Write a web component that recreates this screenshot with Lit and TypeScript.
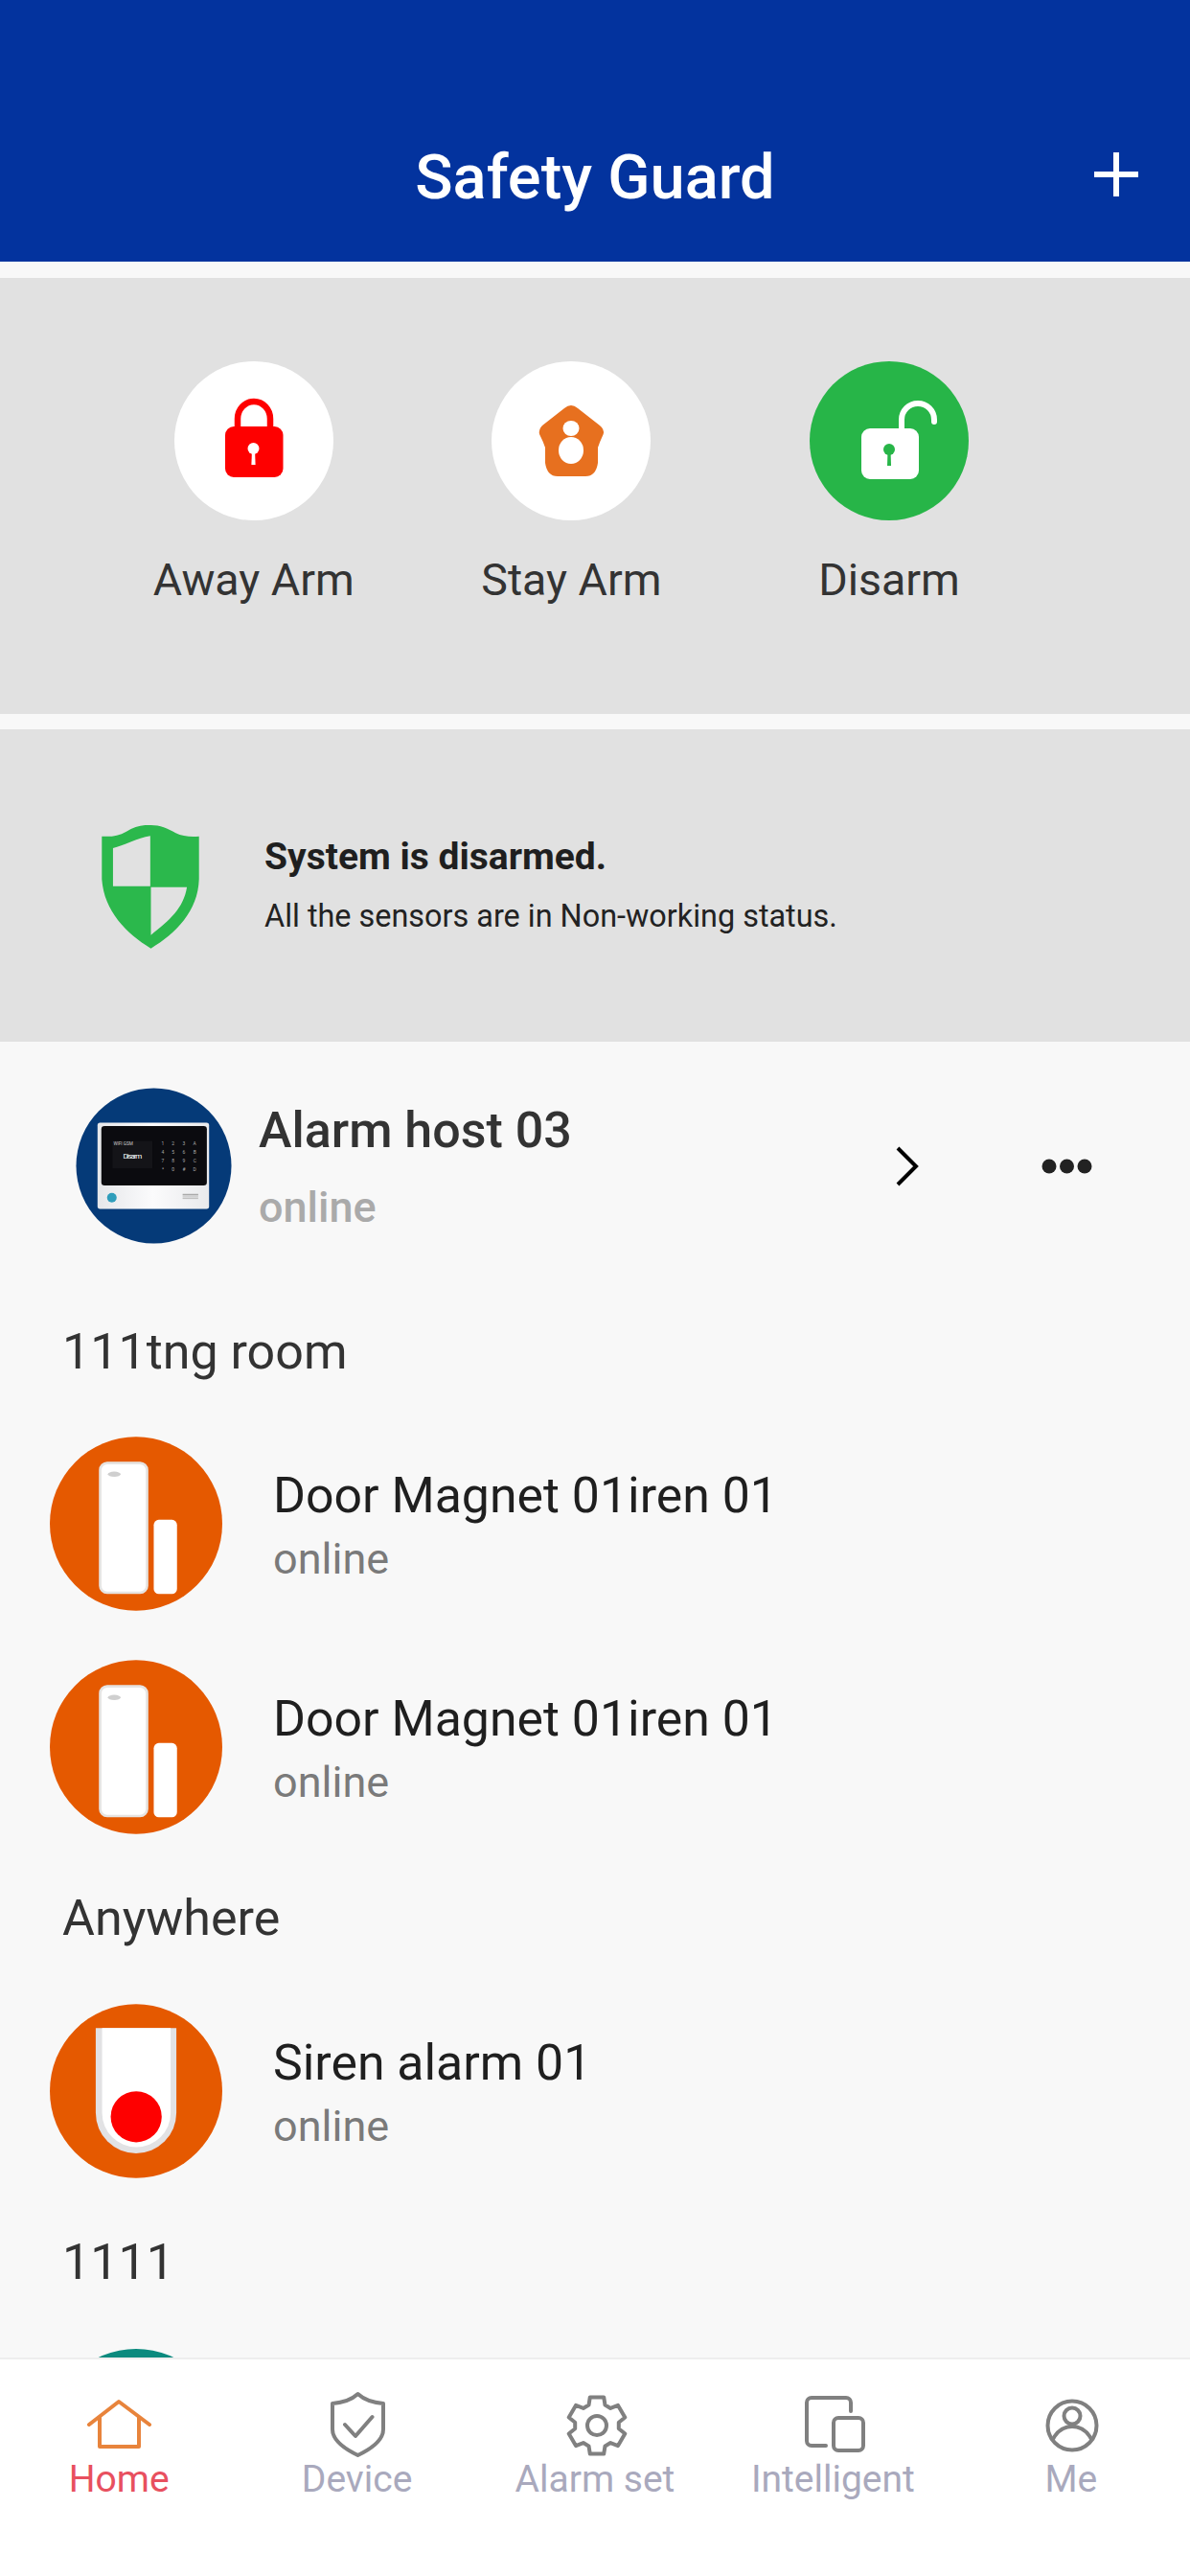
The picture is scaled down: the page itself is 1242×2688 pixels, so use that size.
import { LitElement, html, css, svg } from "lit";
import { customElement } from "lit/decorators.js";

const gearPath = (() => {
  const cx = 37, cy = 36, R = 30.5, r = 23;
  const pts: string[] = [];
  for (let i = 0; i < 6; i++) {
    const a = -Math.PI / 2 + (i * Math.PI) / 3;
    const p = (rad: number, d: number) =>
      `${(cx + rad * Math.cos(a + d)).toFixed(1)} ${(cy + rad * Math.sin(a + d)).toFixed(1)}`;
    pts.push(p(r, -0.38), p(R, -0.24), p(R, 0.24), p(r, 0.38));
  }
  return "M" + pts.join("L") + "Z";
})();

const hostIcon = svg`<svg class="host-img" viewBox="58 45 487 490">
  <defs><linearGradient id="bodyg" x1="0" x2="1" y1="0" y2="0"><stop offset="0" stop-color="#e6e7ea"/><stop offset=".5" stop-color="#fbfbfc"/><stop offset="1" stop-color="#e9eaec"/></linearGradient></defs>
  <circle cx="301.5" cy="290" r="243.5" fill="#053a78"/>
  <rect x="125" y="155" width="350" height="270" rx="8" fill="url(#bodyg)"/>
  <rect x="137" y="165" width="331" height="187" rx="10" fill="#0b0b0f"/>
  <rect x="172" y="212" width="125" height="86" fill="#141418"/>
  <text x="175" y="226" fill="#ccc" font-size="14" font-family="Roboto, sans-serif">WIFI GSM</text>
  <text x="235" y="268" fill="#fff" font-size="24" font-family="Roboto, sans-serif" text-anchor="middle" textLength="60">Disarm</text>
  <g fill="#aaa" font-size="15" font-family="Roboto, sans-serif" text-anchor="middle">
    <text x="330" y="226">1</text><text x="362" y="226">2</text><text x="396" y="226">3</text><text x="430" y="226">A</text>
    <text x="330" y="253">4</text><text x="362" y="253">5</text><text x="396" y="253">6</text><text x="430" y="253">B</text>
    <text x="330" y="279">7</text><text x="362" y="279">8</text><text x="396" y="279">9</text><text x="430" y="279">C</text>
    <text x="330" y="306">*</text><text x="362" y="306">0</text><text x="396" y="306">#</text><text x="430" y="306">D</text>
  </g>
  <circle cx="170" cy="390" r="15" fill="#2f9dbb"/>
  <rect x="392" y="378" width="49" height="5" fill="#aaa"/><rect x="392" y="386" width="49" height="3" fill="#bbb"/><rect x="392" y="391" width="49" height="3" fill="#bbb"/>
</svg>`;

const doorIcon = svg`<svg class="dev-img" viewBox="36 55 541 545">
  <ellipse cx="306.5" cy="327.5" rx="270.5" ry="272.5" fill="#e55900"/>
  <rect x="194" y="137" width="147" height="407" rx="22" fill="#fff" stroke="#e6e4e2" stroke-width="8"/>
  <rect x="362" y="315" width="73" height="233" rx="16" fill="#fff"/>
  <ellipse cx="238" cy="172" rx="20" ry="8" fill="#cfcfcf"/>
</svg>`;

const sirenIcon = svg`<svg class="dev-img" viewBox="36 35 541 545">
  <ellipse cx="306.5" cy="307.5" rx="270.5" ry="272.5" fill="#e55900"/>
  <path d="M180 110H433V376A126.5 126.5 0 0 1 180 376Z" fill="#e2e2e4"/>
  <path d="M200 110H415V376A107.5 107.5 0 0 1 200 376Z" fill="#fff"/>
  <circle cx="307" cy="388" r="80" fill="#fe0000"/>
</svg>`;

const tealIcon = svg`<svg class="dev-img" viewBox="0 0 180 180"><circle cx="90" cy="90" r="90" fill="#0b8a7e"/></svg>`;

const awayIcon = svg`<svg class="mode-svg" viewBox="0 0 166 166">
  <path d="M66 70V60a17 18 0 0 1 34 0V70" fill="none" stroke="#fe0000" stroke-width="6.5"/>
  <rect x="53" y="68" width="60.5" height="53" rx="9" fill="#fe0000"/>
  <circle cx="82.5" cy="91" r="6" fill="#fff"/><path d="M81 92h3l.6 16h-4.2z" fill="#fff"/>
</svg>`;

const stayIcon = svg`<svg class="mode-svg" viewBox="0 0 166 166">
  <path d="M76 49Q83 43 90 49L113 67Q118 71 116.700 76Q113 84 111 90V106Q109 120 98 120H69Q58 120 56 106V90Q54 84 50 76Q49 71 53 67Z" fill="#e7701f"/>
  <ellipse cx="83" cy="70" rx="8.500" ry="8" fill="#fff"/>
  <ellipse cx="83" cy="93" rx="13" ry="14" fill="#fff"/>
</svg>`;

const disarmIcon = svg`<svg class="mode-svg" viewBox="0 0 166 166">
  <path d="M96 72V61A17 17 0 0 1 130 61V63" fill="none" stroke="#fff" stroke-width="6" stroke-linecap="round"/>
  <rect x="54" y="70" width="60" height="53" rx="9" fill="#fff"/>
  <circle cx="83" cy="92" r="6" fill="#27b548"/><path d="M81.500 93h3l.5 16h-4z" fill="#27b548"/>
</svg>`;

const tabIcons = {
  home: svg`<path d="M4 35L35 11L67 35M15 27V58H56V27" stroke="#e8843c"/>`,
  device: svg`<path d="M35.500 3C42 9 50 12 62 13V40C62 52 48 61 35.500 67C23 61 9 52 9 40V13C21 12 29 9 35.500 3Z"/><path d="M22 35L33 47L50.500 27"/>`,
  gear: svg`<path d="${gearPath}"/><circle cx="37" cy="36" r="10"/>`,
  intel: svg`<path d="M54 21V12A5 5 0 0 0 49 7H13A5 5 0 0 0 8 12V52A5 5 0 0 0 13 57H28"/><rect x="36" y="28" width="31" height="34" rx="5"/>`,
  me: svg`<circle cx="36" cy="36" r="25.500"/><circle cx="36" cy="26" r="8.500"/><path d="M16 50C21 41 28 37 36 37C44 37 51 41 56 50"/>`,
};

@customElement("app-root")
export class AppRoot extends LitElement {
  static styles = css`
    :host { display: block; width: 1242px; height: 2688px; font-family: Roboto, "Noto Sans", sans-serif; }
    .page { display: flex; flex-direction: column; height: 2688px; background: #f8f8f8; overflow: hidden; }
    .header { flex: none; height: 273px; box-sizing: border-box; padding-top: 148px; background: #03339e; color: #fff; display: grid; grid-template-columns: 1fr auto 1fr; align-items: start; }
    .title { grid-column: 2; font-size: 65px; line-height: 74px; font-weight: 500; }
    .plus { grid-column: 3; justify-self: end; margin-right: 53px; margin-top: 10px; width: 48px; height: 48px; display: block; }
    .modes { flex: none; margin-top: 17px; height: 455px; box-sizing: border-box; padding: 87px 0 0 99px; background: #e1e1e1; display: flex; }
    .mode { width: 331.600px; display: flex; flex-direction: column; align-items: center; gap: 35px; }
    .circle { width: 166px; height: 166px; border-radius: 50%; background: #fff; }
    .circle.on { background: #27b548; }
    .mode-svg { width: 166px; height: 166px; display: block; }
    .mode-label { font-size: 46.500px; line-height: 54px; color: #333; white-space: nowrap; }
    .status { flex: none; margin-top: 16px; height: 326px; box-sizing: border-box; padding: 100px 0 0 106px; background: #e1e1e1; display: flex; align-items: flex-start; gap: 68px; }
    .shield { width: 102px; height: 129px; display: block; }
    .status-text { display: flex; flex-direction: column; gap: 20px; padding-top: 11px; }
    .status-title { font-size: 39px; line-height: 44px; font-weight: 700; color: #1f1f1f; }
    .status-sub { font-size: 32.400px; line-height: 40px; color: #222; }
    .list { flex: 1; min-height: 0; overflow: hidden; display: flex; flex-direction: column; }
    .host { flex: none; display: flex; align-items: center; padding: 48px 102px 0 79px; }
    .host-img { width: 163px; height: 163px; display: block; flex: none; }
    .host-text { flex: 1; margin-left: 28px; display: flex; flex-direction: column; gap: 24px; margin-top: 3px; }
    .host-name { font-size: 52px; line-height: 60px; font-weight: 500; color: #333; }
    .host-online { font-size: 45px; line-height: 52px; font-weight: 500; color: #aaa; }
    .chev { width: 24px; height: 42px; display: block; margin-right: 128px; }
    .dots { width: 53px; height: 16px; display: block; }
    .room { flex: none; margin-left: 65px; font-size: 52px; line-height: 60px; color: #333; padding: 58px 0 59px; }
    .host + .room { padding-top: 82.500px; padding-bottom: 58.500px; }
    .rows { flex: none; display: flex; flex-direction: column; gap: 51px; }
    .dev { flex: none; height: 182px; display: flex; align-items: center; gap: 53px; padding-left: 52px; }
    .dev-img { width: 180px; height: 182px; display: block; flex: none; }
    .dev-text { display: flex; flex-direction: column; gap: 11px; margin-top: 2px; }
    .dev-name { font-size: 51.800px; line-height: 60px; color: #1f1f1f; }
    .dev-online { font-size: 45px; line-height: 50px; color: #7a7a7a; }
    .tabs { flex: none; height: 228px; box-sizing: border-box; border-top: 2px solid #eeeeee; background: #fff; display: grid; grid-template-columns: repeat(5, 248.400px); padding-top: 33px; }
    .tab { display: flex; flex-direction: column; align-items: center; color: #a9a9bd; font-size: 39px; line-height: 44px; }
    .tab svg { width: 70px; height: 70px; display: block; fill: none; stroke: #808080; stroke-width: 4; stroke-linejoin: round; stroke-linecap: round; }
    .tab.on { color: #e8505f; }
  `;

  private room(name: string) { return html`<div class="room">${name}</div>`; }
  private dev(icon: unknown, name: string) {
    return html`<div class="dev">${icon}<div class="dev-text"><div class="dev-name">${name}</div><div class="dev-online">online</div></div></div>`;
  }
  private tab(icon: unknown, label: string, on = false) {
    return html`<div class="tab ${on ? "on" : ""}"><svg viewBox="0 0 70 70">${icon}</svg><span>${label}</span></div>`;
  }

  render() {
    return html`<div class="page">
      <header class="header">
        <div class="title">Safety Guard</div>
        <svg class="plus" viewBox="0 0 48 48"><path d="M24 1V47M1 24H47" stroke="#fff" stroke-width="6"/></svg>
      </header>
      <section class="modes">
        <div class="mode"><div class="circle">${awayIcon}</div><div class="mode-label">Away Arm</div></div>
        <div class="mode"><div class="circle">${stayIcon}</div><div class="mode-label">Stay Arm</div></div>
        <div class="mode"><div class="circle on">${disarmIcon}</div><div class="mode-label">Disarm</div></div>
      </section>
      <section class="status">
        <svg class="shield" viewBox="138 60 305 388">
          <path d="M138 95C165 97 190 95 215 80C240 65 265 58 292 60C320 60 345 70 370 85C390 96 420 97 443 95V230C440 330 370 400 292 447C215 400 145 330 138 230Z" fill="#2bb84c"/>
          <path d="M173 132C205 125 250 100 290 94V252H173ZM292 255H405C395 320 350 360 292 405Z" fill="#e1e1e1"/>
        </svg>
        <div class="status-text">
          <div class="status-title">System is disarmed.</div>
          <div class="status-sub">All the sensors are in Non-working status.</div>
        </div>
      </section>
      <main class="list">
        <div class="host">
          ${hostIcon}
          <div class="host-text"><div class="host-name">Alarm host 03</div><div class="host-online">online</div></div>
          <svg class="chev" viewBox="0 0 24 42"><path d="M2 2L21 21L2 40" fill="none" stroke="#000" stroke-width="4"/></svg>
          <svg class="dots" viewBox="0 0 53 16"><circle cx="8" cy="8" r="7.500" fill="#222"/><circle cx="26.500" cy="8" r="7.500" fill="#222"/><circle cx="45" cy="8" r="7.500" fill="#222"/></svg>
        </div>
        ${this.room("111tng room")}
        <div class="rows">${this.dev(doorIcon, "Door Magnet 01iren 01")}${this.dev(doorIcon, "Door Magnet 01iren 01")}</div>
        ${this.room("Anywhere")}
        <div class="rows">${this.dev(sirenIcon, "Siren alarm 01")}</div>
        ${this.room("1111")}
        <div class="rows"><div class="dev">${tealIcon}</div></div>
      </main>
      <nav class="tabs">
        ${this.tab(tabIcons.home, "Home", true)}
        ${this.tab(tabIcons.device, "Device")}
        ${this.tab(tabIcons.gear, "Alarm set")}
        ${this.tab(tabIcons.intel, "Intelligent")}
        ${this.tab(tabIcons.me, "Me")}
      </nav>
    </div>`;
  }
}
